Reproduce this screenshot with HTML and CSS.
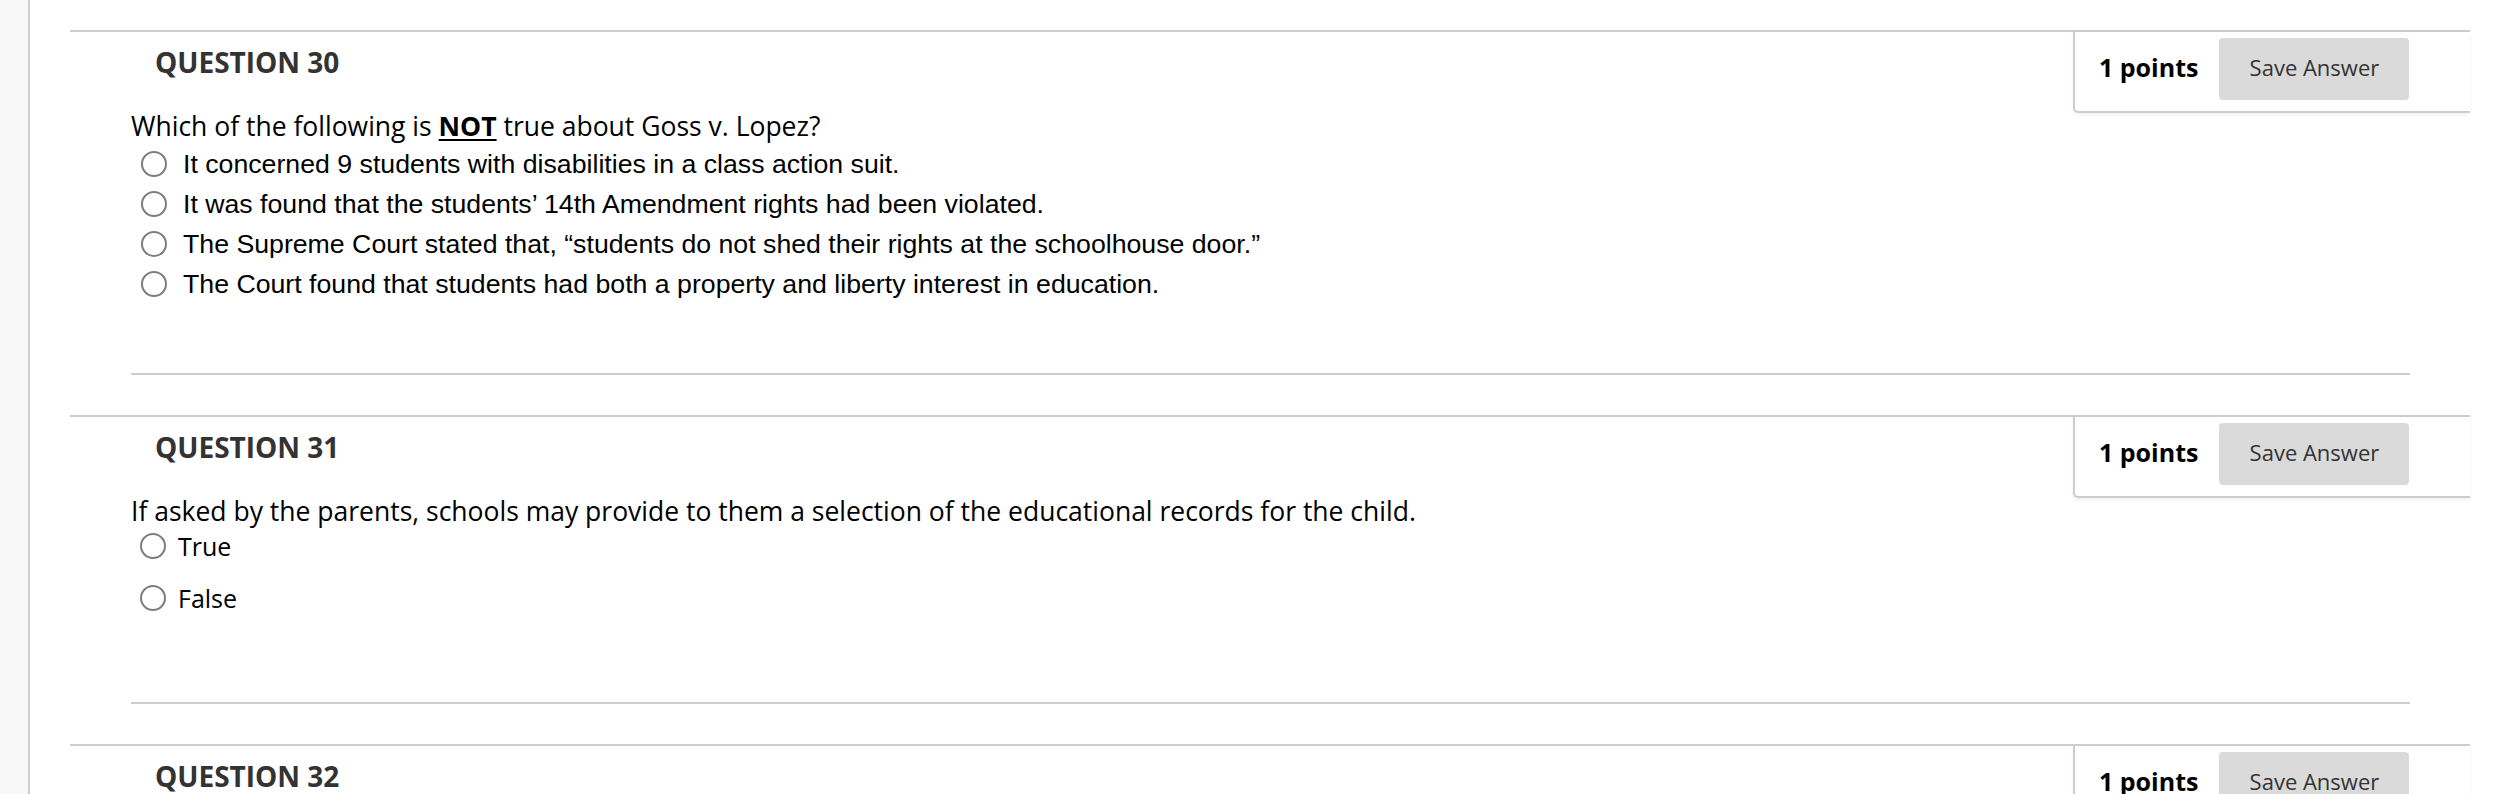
FILE: index.html
```html
<!DOCTYPE html>
<html lang="en">
<head>
<meta charset="utf-8">
<title>Quiz</title>
<link rel="stylesheet" href="styles.css">
</head>
<body>
<aside class="rail"></aside>
<main class="content">
  <section class="question">
    <div class="q-head">
      <h2 class="q-title">QUESTION 30</h2>
      <div class="pts-box">
        <span class="pts">1 points</span>
        <button class="save-btn" type="button">Save Answer</button>
      </div>
    </div>
    <div class="q-body">
      <p class="q-text">Which of the following is <strong class="emph">NOT</strong> true about Goss v. Lopez?</p>
      <ul class="opts opts-arial">
        <li class="opt"><span class="radio"></span><span>It concerned 9 students with disabilities in a class action suit.</span></li>
        <li class="opt"><span class="radio"></span><span>It was found that the students’ 14th Amendment rights had been violated.</span></li>
        <li class="opt"><span class="radio"></span><span>The Supreme Court stated that, “students do not shed their rights at the schoolhouse door.”</span></li>
        <li class="opt"><span class="radio"></span><span>The Court found that students had both a property and liberty interest in education.</span></li>
      </ul>
    </div>
  </section>

  <section class="question">
    <div class="q-head">
      <h2 class="q-title">QUESTION 31</h2>
      <div class="pts-box">
        <span class="pts">1 points</span>
        <button class="save-btn" type="button">Save Answer</button>
      </div>
    </div>
    <div class="q-body">
      <p class="q-text">If asked by the parents, schools may provide to them a selection of the educational records for the child.</p>
      <ul class="opts opts-tf">
        <li class="opt"><span class="radio"></span><span>True</span></li>
        <li class="opt"><span class="radio"></span><span>False</span></li>
      </ul>
    </div>
  </section>

  <section class="question">
    <div class="q-head">
      <h2 class="q-title">QUESTION 32</h2>
      <div class="pts-box">
        <span class="pts">1 points</span>
        <button class="save-btn" type="button">Save Answer</button>
      </div>
    </div>
  </section>
</main>
</body>
</html>
```

FILE: styles.css
```css
html, body {
  margin: 0;
  padding: 0;
  background: #ffffff;
}

body {
  display: flex;
  min-height: 100vh;
  font-family: "Open Sans", "Liberation Sans", Arial, sans-serif;
  color: #000;
  overflow: hidden;
}

.rail {
  flex: 0 0 28px;
  background: #f8f8f8;
  border-right: 2px solid #cfcfcf;
}

.content {
  flex: 1 1 auto;
  padding: 30px 28px 0 40px;
  min-width: 0;
}

.question {
  border-top: 2px solid #cdcdcd;
  margin-bottom: 40px;
}

.q-head {
  display: flex;
  justify-content: space-between;
  align-items: flex-start;
}

.q-title {
  margin: 11px 0 0 85px;
  font-size: 28px;
  line-height: 38px;
  font-weight: 700;
  color: #333333;
}

.pts-box {
  display: flex;
  align-items: center;
  gap: 21px;
  width: 397px;
  box-sizing: border-box;
  padding: 6px 60px 11px 24px;
  margin-bottom: -32px;
  border-left: 2px solid #cdcdcd;
  border-bottom: 2px solid #cdcdcd;
  border-bottom-left-radius: 5px;
  background: #ffffff;
  box-shadow: 0 2px 4px rgba(0, 0, 0, 0.06);
}

.pts {
  font-size: 25px;
  line-height: 34px;
  font-weight: 700;
  color: #000;
  white-space: nowrap;
  margin-bottom: 5px;
}

.save-btn {
  width: 190px;
  height: 62px;
  border: none;
  border-radius: 4px;
  background: #dadada;
  color: #333333;
  font-family: "Open Sans", sans-serif;
  font-size: 22px;
  line-height: 30px;
  padding: 0 0 5px;
}

.q-body {
  margin: 0 60px 0 61px;
  padding-bottom: 69px;
  border-bottom: 2px solid #cdcdcd;
}

.q-text {
  margin: 27px 0 0;
  font-size: 26.5px;
  line-height: 36px;
  color: #000;
}

.emph {
  font-weight: 700;
  text-decoration: underline;
  text-underline-offset: 3px;
}

.opts {
  list-style: none;
  margin: 0;
  padding: 0 0 0 10px;
}

.opt {
  display: flex;
  align-items: center;
}

.radio {
  flex: 0 0 auto;
  width: 26px;
  height: 26px;
  box-sizing: border-box;
  border: 2px solid #7d7d7d;
  border-radius: 50%;
  background: #fff;
}

.opts-arial .opt {
  font-family: "Liberation Sans", Arial, sans-serif;
  font-size: 26.7px;
  line-height: 40px;
  gap: 16px;
}

.opts-tf {
  padding-left: 9px;
}

.opts-tf .opt {
  font-size: 25px;
  line-height: 34px;
  margin-bottom: 18px;
  gap: 12px;
}
```
